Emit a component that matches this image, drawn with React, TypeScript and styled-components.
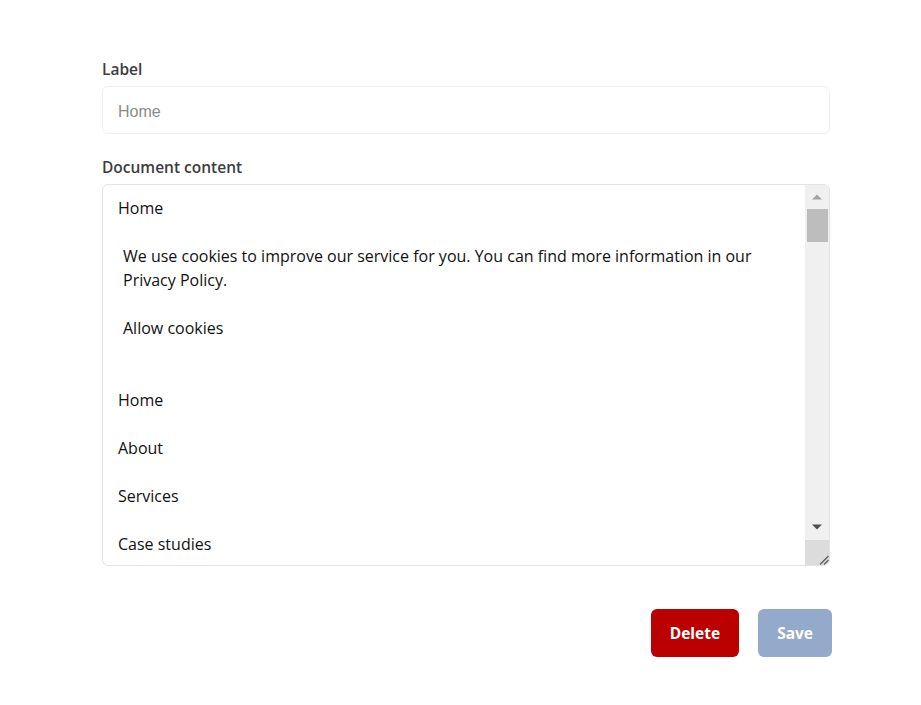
import React from "react";
import styled, { createGlobalStyle } from "styled-components";

const GlobalStyle = createGlobalStyle`
  html, body { margin: 0; padding: 0; background: #ffffff; }
  body { font-family: "Open Sans", "Noto Sans", sans-serif; color: #111111; }
`;

const Page = styled.div`
  padding: 58px 0 40px 102px;
`;

const Form = styled.form`
  width: 728px;
  display: flex;
  flex-direction: column;
`;

const FieldLabel = styled.label<{ $first?: boolean }>`
  display: block;
  font-size: 15.5px;
  font-weight: 600;
  line-height: 22px;
  color: #3c3c3c;
  margin: ${(p) => (p.$first ? "0" : "22px")} 0 6px;
`;

const TextInput = styled.input`
  box-sizing: border-box;
  width: 100%;
  height: 48px;
  border: 1px solid #eeeff3;
  border-radius: 6px;
  padding: 3px 15px 0;
  font-family: "Liberation Sans", Arial, sans-serif;
  font-size: 16px;
  color: #222;
  outline: none;
  &::placeholder { color: #8a8a8a; }
`;

const ContentBox = styled.div`
  box-sizing: border-box;
  width: 100%;
  height: 382px;
  border: 1px solid #dfe3ea;
  border-radius: 6px;
  display: flex;
  overflow: hidden;
`;

const Scroller = styled.div`
  flex: 1;
  min-width: 0;
  padding: 11px 15px 0;
  overflow-y: auto;
  scrollbar-width: none;
  font-size: 16px;
  line-height: 24px;
  color: #111;
  &::-webkit-scrollbar { display: none; }
`;

const ScrollBar = styled.div`
  width: 24px;
  flex: none;
  display: flex;
  flex-direction: column;
  background: #f0f0f0;
`;

const ArrowButton = styled.div<{ $h: number }>`
  height: ${(p) => p.$h}px;
  flex: none;
  display: flex;
  align-items: center;
  justify-content: center;
`;

const Track = styled.div`
  flex: 1;
  display: flex;
  flex-direction: column;
  padding: 0 1px 0 2px;
`;

const Thumb = styled.div`
  height: 33px;
  background: #bdbdbd;
`;

const Corner = styled.div`
  height: 25px;
  flex: none;
  background: #dcdcdc;
  display: flex;
  align-items: flex-end;
  justify-content: flex-end;
`;

const Para = styled.p`
  margin: 0 0 24px;
`;

const Banner = styled.div`
  padding: 0 5px 24px;
`;

const Actions = styled.div`
  width: 730px;
  display: flex;
  justify-content: flex-end;
  gap: 19px;
  margin-top: 43px;
`;

const Button = styled.button<{ $variant: "danger" | "primary" }>`
  height: 48px;
  padding: 0 19px;
  border: none;
  border-radius: 6px;
  font-family: "Open Sans", "Noto Sans", sans-serif;
  font-size: 15.5px;
  font-weight: 700;
  color: #ffffff;
  background: ${(p) => (p.$variant === "danger" ? "#bb0000" : "#94aacb")};
  cursor: ${(p) => (p.$variant === "danger" ? "pointer" : "default")};
`;

const navItems = ["Home", "About", "Services", "Case studies", "Blog", "Contact"];

const bodyItems = [
  "Digital solutions for growing businesses",
  "We help companies design, build and grow their online presence.",
  "Get in touch",
  "Our services",
  "Web design",
  "Beautiful, accessible websites that work on every device.",
  "Development",
  "Fast and reliable applications built with modern tools.",
  "Content strategy",
  "Clear messaging that connects with your audience.",
  "Search engine optimisation",
  "Be found by the people who are looking for you.",
  "Hosting and support",
  "Secure hosting and friendly support when you need it.",
  "Selected case studies",
  "Northwind Trading",
  "A new online shop that doubled monthly sales.",
  "Read more",
  "Green Valley Farms",
  "A booking platform for seasonal farm tours.",
  "Read more",
  "City Library",
  "An accessible catalogue for thousands of readers.",
  "Read more",
  "What our clients say",
  "“The team was responsive, creative and easy to work with.”",
  "Latest from the blog",
  "Five tips for a faster website",
  "Why accessibility matters",
  "Planning your next redesign",
  "View all posts",
  "Ready to start your project?",
  "Contact us",
  "Company",
  "About",
  "Careers",
  "Press",
  "Resources",
  "Blog",
  "Guides",
  "Support",
  "Legal",
  "Privacy Policy",
  "Terms of use",
  "Cookie settings",
  "© 2024 All rights reserved.",
];

export default function App() {
  return (
    <>
      <GlobalStyle />
      <Page>
        <Form onSubmit={(e) => e.preventDefault()}>
          <FieldLabel $first htmlFor="label">Label</FieldLabel>
          <TextInput id="label" placeholder="Home" />
          <FieldLabel>Document content</FieldLabel>
          <ContentBox>
            <Scroller>
              <Para>Home</Para>
              <Banner>
                <Para>
                  We use cookies to improve our service for you. You can find more information in our Privacy Policy.
                </Para>
                <Para>Allow cookies</Para>
              </Banner>
              {navItems.map((t, i) => (
                <Para key={"n" + i}>{t}</Para>
              ))}
              {bodyItems.map((t, i) => (
                <Para key={"b" + i}>{t}</Para>
              ))}
            </Scroller>
            <ScrollBar aria-hidden="true">
              <ArrowButton $h={24}>
                <svg width="10" height="6" viewBox="0 0 10 6">
                  <polygon points="5,0.5 10,5.5 0,5.5" fill="#a3a3a3" />
                </svg>
              </ArrowButton>
              <Track>
                <Thumb />
              </Track>
              <ArrowButton $h={26}>
                <svg width="10" height="6" viewBox="0 0 10 6">
                  <polygon points="0,0.5 10,0.5 5,5.5" fill="#505050" />
                </svg>
              </ArrowButton>
              <Corner>
                <svg width="12" height="12" viewBox="0 0 12 12">
                  <line x1="3" y1="11.5" x2="11.5" y2="3" stroke="#5a5a5a" strokeWidth="1.2" />
                  <line x1="7" y1="11.5" x2="11.5" y2="7" stroke="#5a5a5a" strokeWidth="1.2" />
                </svg>
              </Corner>
            </ScrollBar>
          </ContentBox>
          <Actions>
            <Button type="button" $variant="danger">Delete</Button>
            <Button type="button" $variant="primary">Save</Button>
          </Actions>
        </Form>
      </Page>
    </>
  );
}
